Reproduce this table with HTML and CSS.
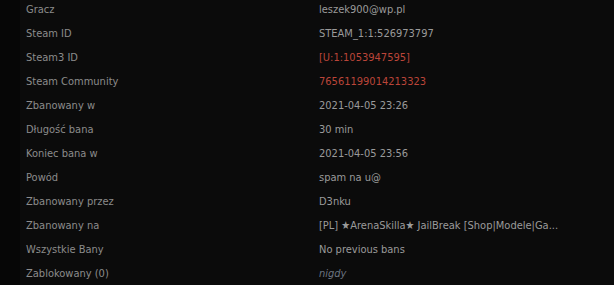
FILE: index.html
```html
<!DOCTYPE html>
<html lang="pl">
<head>
  <meta charset="UTF-8">
  <meta name="viewport" content="width=device-width, initial-scale=1.0">
  <title>Szczegóły bana</title>
  <link rel="stylesheet" href="styles.css">
</head>
<body>

  <div class="panel">
    <table class="ban-table">
      <tr><td class="label">Gracz</td><td class="value">leszek900@wp.pl</td></tr>
      <tr><td class="label">Steam ID</td><td class="value">STEAM_1:1:526973797</td></tr>
      <tr><td class="label">Steam3 ID</td><td class="value red">[U:1:1053947595]</td></tr>
      <tr><td class="label">Steam Community</td><td class="value red">76561199014213323</td></tr>
      <tr><td class="label">Zbanowany w</td><td class="value">2021-04-05 23:26</td></tr>
      <tr><td class="label">Długość bana</td><td class="value">30 min</td></tr>
      <tr><td class="label">Koniec bana w</td><td class="value">2021-04-05 23:56</td></tr>
      <tr><td class="label">Powód</td><td class="value">spam na u@</td></tr>
      <tr><td class="label">Zbanowany przez</td><td class="value">D3nku</td></tr>
      <tr><td class="label">Zbanowany na</td><td class="value">[PL] ★ArenaSkilla★ JailBreak [Shop|Modele|Ga...</td></tr>
      <tr><td class="label">Wszystkie Bany</td><td class="value">No previous bans</td></tr>
      <tr><td class="label">Zablokowany (0)</td><td class="value muted">nigdy</td></tr>
    </table>
  </div>

</body>
</html>
```

FILE: styles.css
```css
body {
  margin: 0;
  padding: 0;
  background-color: #060606;
  font-family: "DejaVu Sans Condensed", "DejaVu Sans", sans-serif;
  font-size: 11px;
  overflow: hidden;
}

.panel {
  margin-left: 20px;
  min-height: 100vh;
  background-color: #0b0b0b;
}

.ban-table {
  width: 100%;
  border-collapse: collapse;
  margin-top: -2px;
}

.ban-table td {
  padding: 0 6px;
  height: 24px;
  line-height: 24px;
  white-space: nowrap;
}

.label {
  width: 281px;
  color: #8c8c8c;
}

.value {
  color: #9a9a9a;
}

.value.red {
  color: #bb4539;
}

.value.muted {
  color: #6b7480;
  font-style: italic;
}
```
